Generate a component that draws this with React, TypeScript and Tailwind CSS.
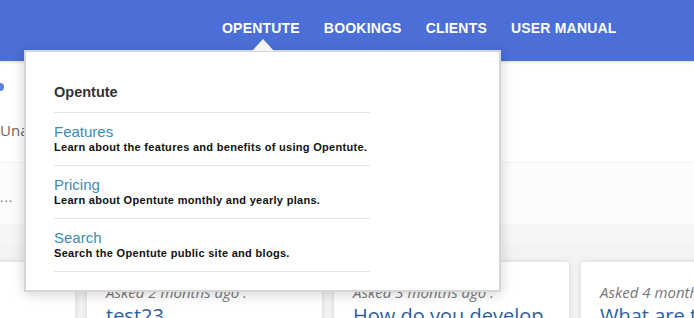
import React from "react";

const items = [
  { t: "Features", d: "Learn about the features and benefits of using Opentute." },
  { t: "Pricing", d: "Learn about Opentute monthly and yearly plans." },
  { t: "Search", d: "Search the Opentute public site and blogs." },
];

const cards = [
  { a: "", t: "" },
  { a: "Asked 2 months ago :", t: "test23" },
  { a: "Asked 3 months ago :", t: "How do you develop" },
  { a: "Asked 4 months ago :", t: "What are the" },
];

export default function App() {
  return (
    <div className="relative w-[694px] h-[318px] overflow-hidden bg-[#f3f3f3]" style={{ fontFamily: '"Liberation Sans", Arial, sans-serif' }}>
      <header className="h-[61px] bg-[#4b6fd6] shadow-[0_1px_3px_rgba(0,0,0,0.15)] relative z-10">
        <nav className="flex gap-[24px] pl-[222px] pt-[18px] text-white font-bold text-[14px] tracking-[0.2px]">
          <span>OPENTUTE</span>
          <span>BOOKINGS</span>
          <span>CLIENTS</span>
          <span>USER MANUAL</span>
        </nav>
      </header>

      <section className="h-[101px] bg-white relative" style={{ fontFamily: '"Open Sans", sans-serif' }}>
        <div className="absolute left-[-4px] top-[22px] w-[8px] h-[8px] rounded-full bg-[#5a7fe0]" />
        <div className="absolute left-0 top-[58px] text-[15px] text-[#666]">Unanswered</div>
      </section>
      <section className="h-[62px] bg-[#fcfcfc] border-t border-[#f2f2f2] relative" style={{ fontFamily: '"Open Sans", sans-serif' }}>
        <div className="pt-[28px] text-[13px] leading-none text-[#777] tracking-[1px]">...</div>
      </section>
      <section className="h-[20px] bg-[#f6f6f6]" />

      <div className="flex gap-[12px] ml-[-160px] mt-[18px]" style={{ fontFamily: '"Open Sans", sans-serif' }}>
        {cards.map((c, i) => (
          <div key={i} className="w-[235px] h-[80px] shrink-0 bg-white shadow-[0_0_6px_rgba(0,0,0,0.12)] pl-[19px] pt-[20px]">
            <div className="italic text-[15px] leading-[20px] text-[#777] whitespace-nowrap">{c.a}</div>
            <div className="text-[20px] leading-[26px] text-[#2d5e9f] whitespace-nowrap mt-[1px]">{c.t}</div>
          </div>
        ))}
      </div>

      <div className="absolute left-[24px] top-[50px] w-[477px] h-[242px] bg-white border-2 border-[#d6d6d6] shadow-[0_2px_12px_rgba(0,0,0,0.18)] z-20">
        <div className="absolute left-[226px] top-[-13px] w-0 h-0 border-l-[11px] border-r-[11px] border-b-[12px] border-l-transparent border-r-transparent border-b-[#f4f4f4]" />
        <div className="pl-[28px] pt-[32px] w-[344px]">
          <div className="font-bold text-[14.5px] text-[#333] leading-[17px]">Opentute</div>
          <div className="mt-[11px] border-t border-[#e4e4e4]" />
          {items.map((it) => (
            <div key={it.t} className="border-b border-[#e4e4e4] pt-[10px] pb-[11px]">
              <div className="text-[15px] leading-[17px] text-[#3b8bb4]">{it.t}</div>
              <div className="text-[11px] leading-[14px] font-bold text-[#111] tracking-[0.3px]">{it.d}</div>
            </div>
          ))}
        </div>
      </div>
    </div>
  );
}
